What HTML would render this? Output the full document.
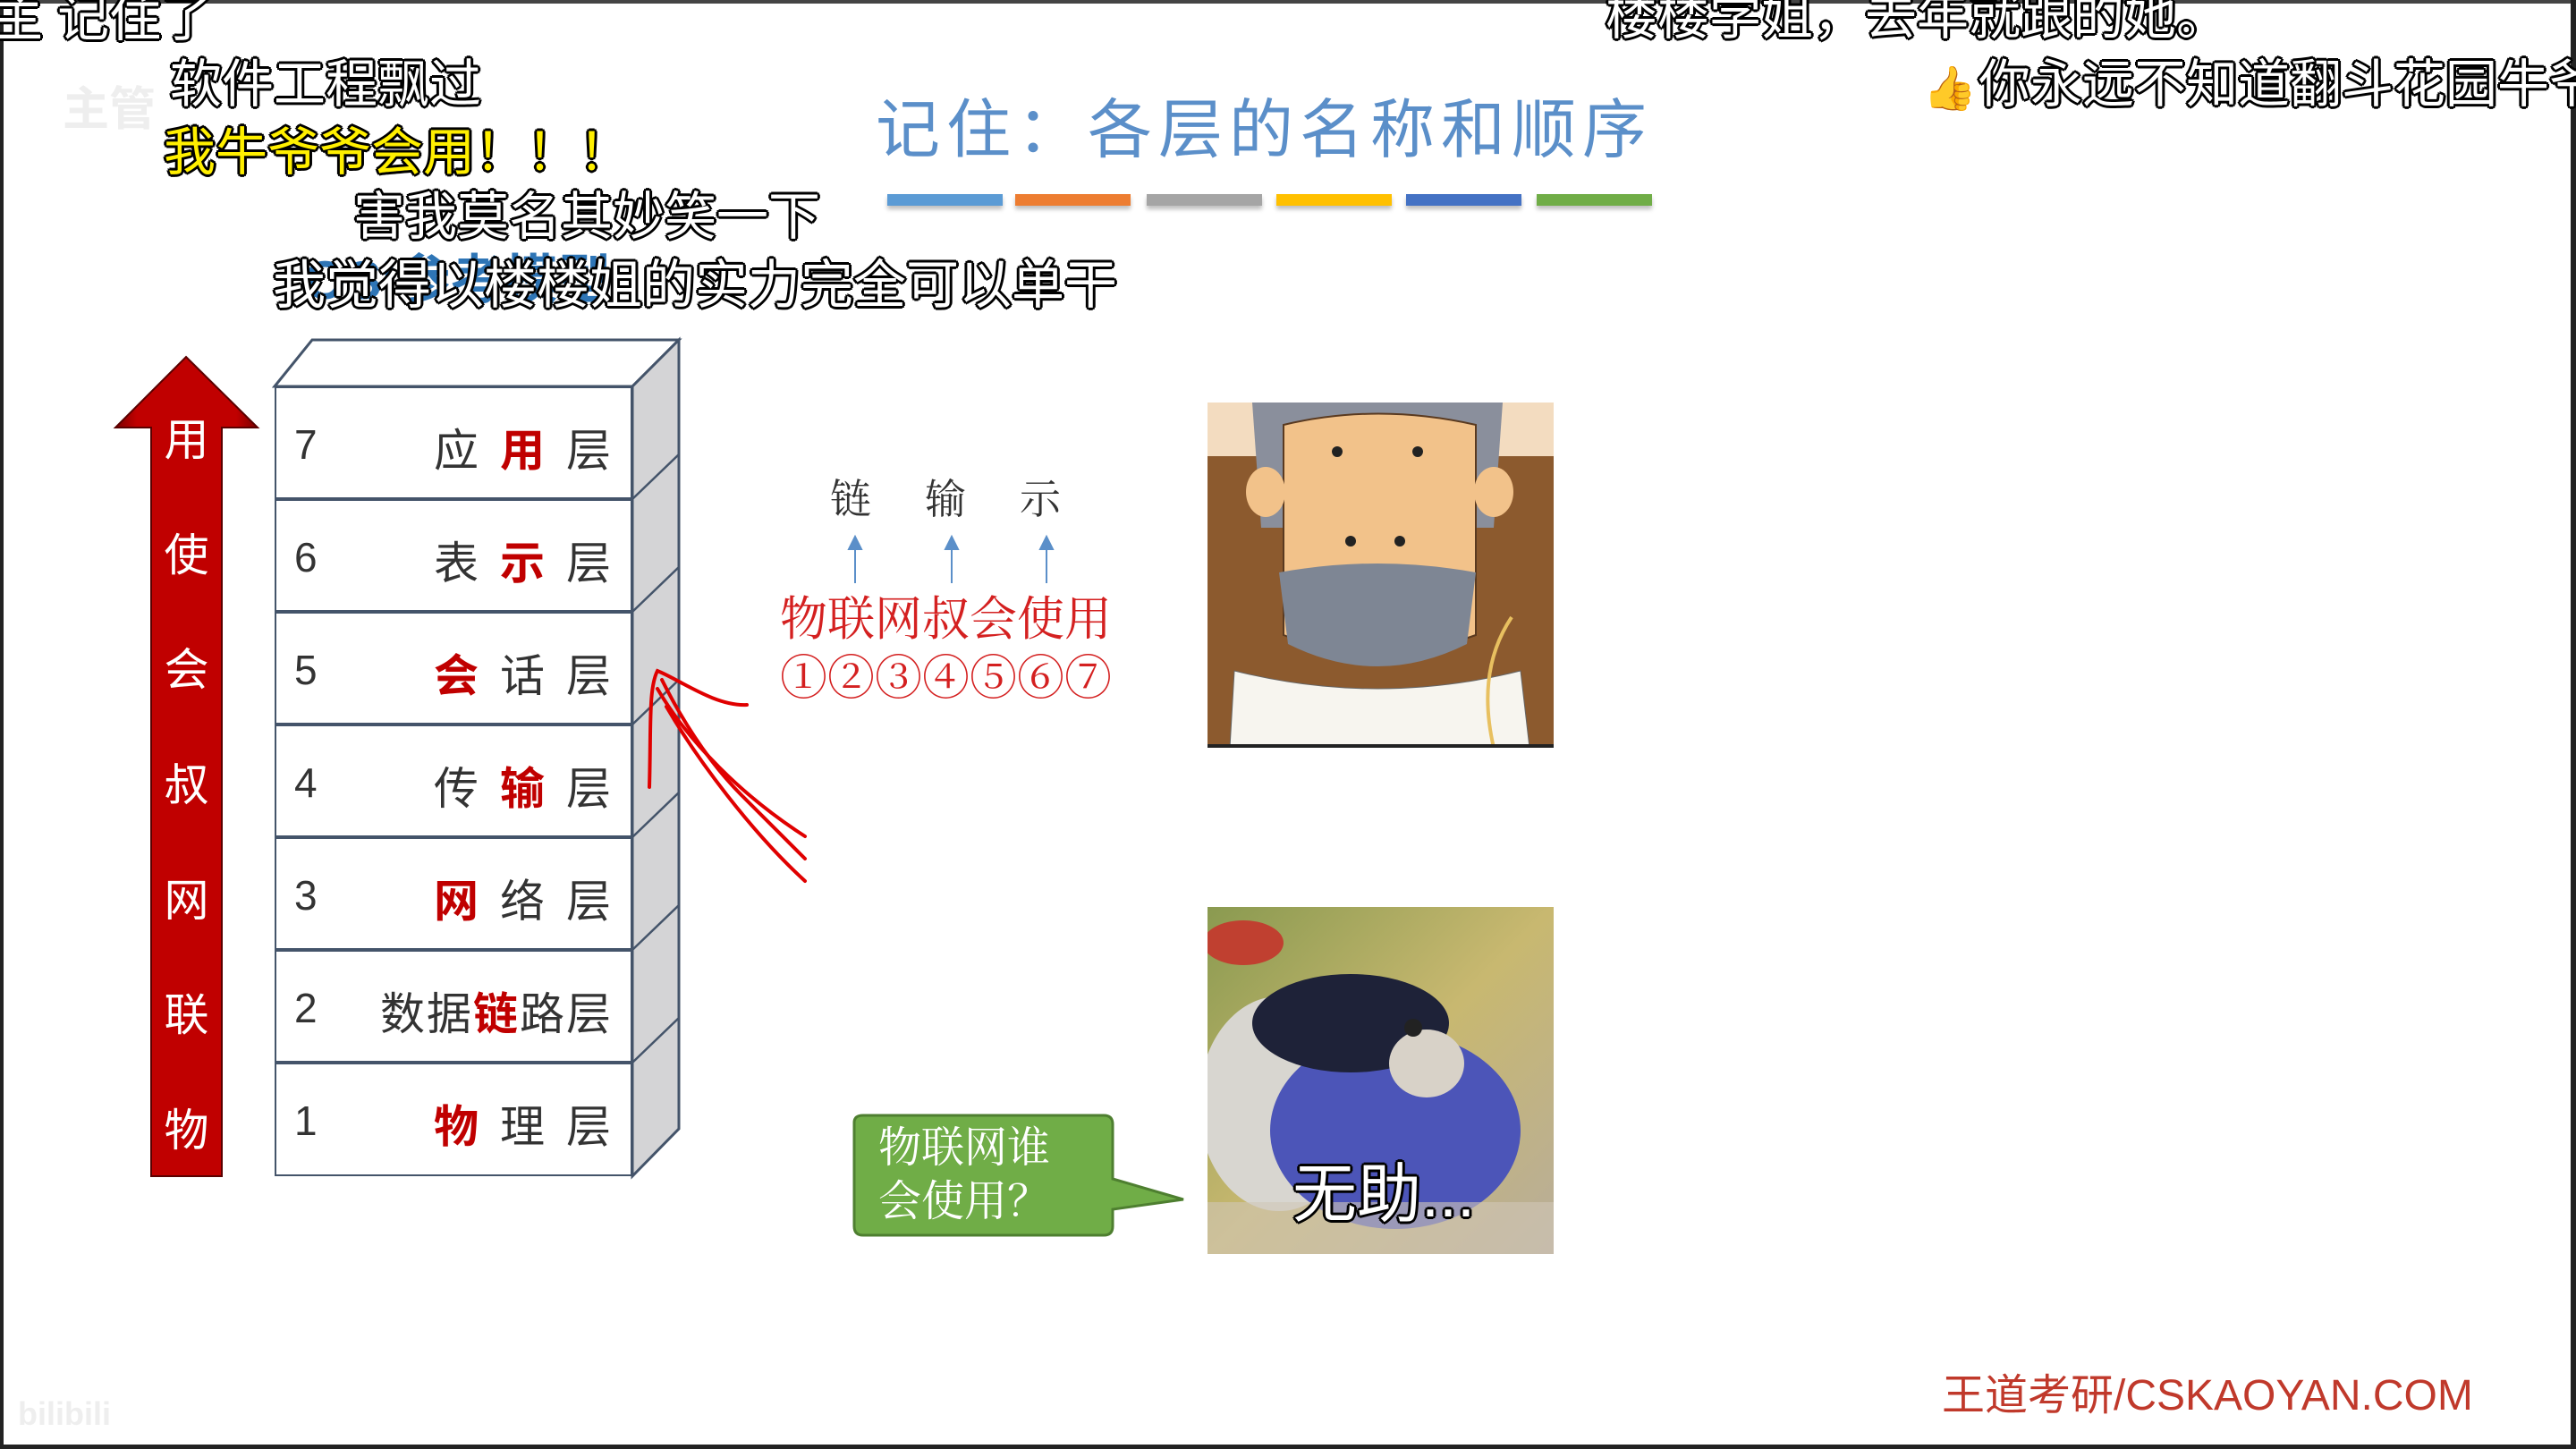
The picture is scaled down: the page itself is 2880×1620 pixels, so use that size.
<!DOCTYPE html>
<html><head><meta charset="utf-8"><style>
*{margin:0;padding:0;box-sizing:border-box}
body{width:2880px;height:1620px;background:#fff;position:relative;overflow:hidden;font-family:"Liberation Sans","Noto Sans CJK SC",sans-serif}
.a{position:absolute;white-space:nowrap}
.dm{font-size:58px;color:#fff;font-weight:normal;text-shadow:-2px -2px 0 #000,2px -2px 0 #000,-2px 2px 0 #000,2px 2px 0 #000,0 3px 0 #000,0 -3px 0 #000,3px 0 0 #000,-3px 0 0 #000;line-height:1}
.bar{position:absolute;top:217px;height:13px;width:129px;box-shadow:0 4px 5px rgba(0,0,0,.25)}
.row{position:absolute;left:307px;width:400px;height:126px;border:2px solid #44546a;background:#fff;color:#333}
.num{position:absolute;left:20px;top:36px;font-size:46px}
.lb{position:absolute;right:22px;top:30px;font-size:50px;letter-spacing:24px;margin-right:-24px}
.lb b{color:#c00000;font-weight:bold}
.ac{position:absolute;left:169px;width:79px;text-align:center;color:#fff;font-size:50px;line-height:1}
.sf{font-family:"Liberation Serif","Noto Serif CJK SC",serif}
</style></head><body>
<div class="a" style="left:0;top:0;width:2880px;height:4px;background:#444"></div>
<div class="a" style="left:0;top:0;width:4px;height:1620px;background:#222"></div>
<div class="a" style="left:2874px;top:0;width:6px;height:1620px;background:#222"></div>
<div class="a" style="left:0;top:1615px;width:2880px;height:5px;background:#222"></div>

<div class="a" style="left:979px;top:86px;font-size:72px;letter-spacing:7px;color:#5b8fc9">记住：各层的名称和顺序</div>
<div class="bar" style="left:992px;background:#5b9bd5"></div>
<div class="bar" style="left:1135px;background:#ed7d31"></div>
<div class="bar" style="left:1282px;background:#a5a5a5"></div>
<div class="bar" style="left:1427px;background:#ffc000"></div>
<div class="bar" style="left:1572px;background:#4472c4"></div>
<div class="bar" style="left:1718px;background:#70ad47"></div>
<div class="a" style="left:340px;top:265px;font-size:60px;color:#2e75b6;font-weight:bold">OSI参考模型</div>

<svg class="a" style="left:0;top:0" width="800" height="1400">
<defs><linearGradient id="g" x1="0" x2="1"><stop offset="0" stop-color="#7a0000"/><stop offset=".15" stop-color="#c00000"/><stop offset=".85" stop-color="#c00000"/><stop offset="1" stop-color="#7a0000"/></linearGradient></defs>
<path d="M208 399 L288 478 L248 478 L248 1315 L169 1315 L169 478 L129 478 Z" fill="url(#g)" stroke="#5a0000" stroke-width="2"/>
<polygon points="307,432 349,380 759,380 707,432" fill="#fff" stroke="#44546a" stroke-width="3"/>
<polygon points="707,432 759,380 759,1262 707,1315" fill="#d4d4d6" stroke="#44546a" stroke-width="3"/>
<g stroke="#44546a" stroke-width="2.5">
<line x1="707" y1="558" x2="759" y2="508"/><line x1="707" y1="684" x2="759" y2="634"/><line x1="707" y1="810" x2="759" y2="760"/><line x1="707" y1="936" x2="759" y2="886"/><line x1="707" y1="1062" x2="759" y2="1012"/><line x1="707" y1="1188" x2="759" y2="1138"/>
</g>
</svg>
<div class="ac" style="top:467px">用</div><div class="ac" style="top:596px">使</div><div class="ac" style="top:724px">会</div><div class="ac" style="top:853px">叔</div><div class="ac" style="top:982px">网</div><div class="ac" style="top:1110px">联</div><div class="ac" style="top:1239px">物</div>

<div class="row" style="top:432px"><span class="num">7</span><span class="lb">应<b>用</b>层</span></div>
<div class="row" style="top:558px"><span class="num">6</span><span class="lb">表<b>示</b>层</span></div>
<div class="row" style="top:684px"><span class="num">5</span><span class="lb"><b>会</b>话层</span></div>
<div class="row" style="top:810px"><span class="num">4</span><span class="lb">传<b>输</b>层</span></div>
<div class="row" style="top:936px"><span class="num">3</span><span class="lb"><b>网</b>络层</span></div>
<div class="row" style="top:1062px"><span class="num">2</span><span class="lb" style="letter-spacing:2px;margin-right:-2px">数据<b>链</b>路层</span></div>
<div class="row" style="top:1188px;height:127px"><span class="num">1</span><span class="lb"><b>物</b>理层</span></div>

<div class="a sf" style="left:928px;top:522px;font-size:46px;color:#333;letter-spacing:60px">链输示</div>
<svg class="a" style="left:0;top:0" width="1400" height="1400">
<g stroke="#5b8fc9" stroke-width="2" fill="#5b8fc9">
<line x1="956" y1="612" x2="956" y2="652"/><polygon points="949,614 963,614 956,600"/>
<line x1="1064" y1="612" x2="1064" y2="652"/><polygon points="1057,614 1071,614 1064,600"/>
<line x1="1170" y1="612" x2="1170" y2="652"/><polygon points="1163,614 1177,614 1170,600"/>
</g>
<g fill="none" stroke="#e00000" stroke-width="4" stroke-linecap="round">
<path d="M835 788 C800 790 760 760 735 750 C725 770 728 810 726 880"/>
<path d="M735 770 C770 830 830 890 900 935"/>
<path d="M745 790 C780 850 840 930 900 985"/>
<path d="M740 760 C760 800 790 850 830 890 C860 920 890 950 900 960"/>
</g>
<path d="M955 1255 Q955 1247 965 1247 L1234 1247 Q1244 1247 1244 1257 L1244 1318 L1323 1341 L1244 1352 L1244 1371 Q1244 1381 1234 1381 L965 1381 Q955 1381 955 1371 Z" fill="#70ad47" stroke="#4e7f30" stroke-width="3"/>
</svg>
<div class="a sf" style="left:872px;top:650px;font-size:53px;color:#d42020">物联网叔会使用</div>
<div class="a sf" style="left:872px;top:716px;font-size:53px;color:#d42020">①②③④⑤⑥⑦</div>
<div class="a sf" style="left:982px;top:1254px;font-size:48px;color:#fff;line-height:60px">物联网谁<br>会使用？</div>

<svg class="a" style="left:1350px;top:450px" width="387" height="386" viewBox="0 0 387 386">
<rect width="387" height="386" fill="#f3dcc0"/>
<rect y="60" width="387" height="326" fill="#8c5a2e"/>
<path d="M50 0 L330 0 L320 140 L60 140 Z" fill="#8a8f9c"/>
<path d="M85 25 Q190 0 300 25 L300 260 Q190 300 85 260 Z" fill="#f2c28a" stroke="#5a3a20" stroke-width="2"/>
<ellipse cx="65" cy="100" rx="22" ry="28" fill="#f2c28a"/><ellipse cx="320" cy="100" rx="22" ry="28" fill="#f2c28a"/>
<circle cx="145" cy="55" r="6" fill="#222"/><circle cx="235" cy="55" r="6" fill="#222"/>
<circle cx="160" cy="155" r="6" fill="#222"/><circle cx="215" cy="155" r="6" fill="#222"/>
<path d="M30 300 Q190 340 350 300 L360 386 L25 386 Z" fill="#f7f5ef" stroke="#666"/>
<path d="M80 190 Q190 170 300 190 L290 270 Q190 320 90 270 Z" fill="#7e8694"/>
<path d="M340 240 Q300 300 320 386" stroke="#e8c060" stroke-width="4" fill="none"/>
<rect y="382" width="387" height="4" fill="#222"/>
</svg>
<svg class="a" style="left:1350px;top:1014px" width="387" height="388" viewBox="0 0 387 388">
<defs><linearGradient id="bg2" x1="0" y1="0" x2="1" y2="1"><stop offset="0" stop-color="#8a9a50"/><stop offset=".5" stop-color="#c8b870"/><stop offset="1" stop-color="#b8ad9a"/></linearGradient></defs>
<rect width="387" height="388" fill="url(#bg2)"/>
<ellipse cx="40" cy="40" rx="45" ry="25" fill="#c04030"/>
<ellipse cx="80" cy="220" rx="90" ry="120" fill="#d8d6d0"/>
<ellipse cx="210" cy="250" rx="140" ry="110" fill="#4c55b8"/>
<ellipse cx="160" cy="130" rx="110" ry="55" fill="#1e2238"/>
<ellipse cx="245" cy="175" rx="42" ry="38" fill="#d8d2c8"/>
<circle cx="230" cy="135" r="10" fill="#222"/>
<rect y="330" width="387" height="58" fill="#d0c6b8" opacity=".6"/>
</svg>
<div class="a dm" style="left:1445px;top:1300px;font-size:72px">无助...</div>

<div class="a" style="left:2171px;top:1520px;font-size:48px;color:#c0392b">王道考研/CSKAOYAN.COM</div>
<div class="a" style="left:20px;top:1560px;font-size:36px;color:#eee;font-weight:bold">bilibili</div>

<div class="a dm" style="left:-10px;top:-8px">主  记住了</div>
<div class="a" style="left:70px;top:80px;font-size:52px;color:#eee;font-weight:bold">主管</div>
<div class="a dm" style="left:190px;top:66px">软件工程飘过</div>
<div class="a dm" style="left:183px;top:142px;color:#ffef00">我牛爷爷会用！！！</div>
<div class="a dm" style="left:395px;top:214px">害我莫名其妙笑一下</div>
<div class="a dm" style="left:305px;top:290px;font-size:59px">我觉得以楼楼姐的实力完全可以单干</div>
<div class="a dm" style="left:1795px;top:-10px">楼楼学姐，去年就跟的她。</div>
<div class="a" style="left:2150px;top:70px;font-size:48px;color:#fcc860">👍</div>
<div class="a dm" style="left:2212px;top:66px">你永远不知道翻斗花园牛爷</div>
</body></html>
